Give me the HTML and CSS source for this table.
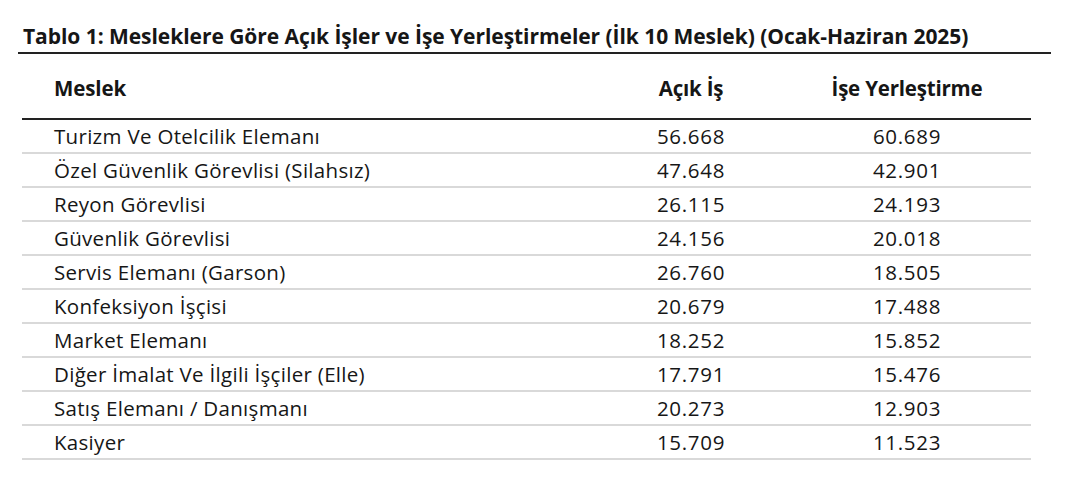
FILE: index.html
```html
<!DOCTYPE html>
<html lang="tr">
<head>
<meta charset="utf-8">
<link rel="stylesheet" href="styles.css">
</head>
<body>
<div class="page">
  <h1 class="title">Tablo 1: Mesleklere Göre Açık İşler ve İşe Yerleştirmeler (İlk 10 Meslek) (Ocak-Haziran 2025)</h1>
  <div class="table">
    <div class="row head">
      <div class="c1">Meslek</div>
      <div class="c2">Açık İş</div>
      <div class="c3">İşe Yerleştirme</div>
    </div>
    <div class="row"><div class="c1">Turizm Ve Otelcilik Elemanı</div><div class="c2 num">56.668</div><div class="c3 num">60.689</div></div>
    <div class="row"><div class="c1">Özel Güvenlik Görevlisi (Silahsız)</div><div class="c2 num">47.648</div><div class="c3 num">42.901</div></div>
    <div class="row"><div class="c1">Reyon Görevlisi</div><div class="c2 num">26.115</div><div class="c3 num">24.193</div></div>
    <div class="row"><div class="c1">Güvenlik Görevlisi</div><div class="c2 num">24.156</div><div class="c3 num">20.018</div></div>
    <div class="row"><div class="c1">Servis Elemanı (Garson)</div><div class="c2 num">26.760</div><div class="c3 num">18.505</div></div>
    <div class="row"><div class="c1">Konfeksiyon İşçisi</div><div class="c2 num">20.679</div><div class="c3 num">17.488</div></div>
    <div class="row"><div class="c1">Market Elemanı</div><div class="c2 num">18.252</div><div class="c3 num">15.852</div></div>
    <div class="row"><div class="c1">Diğer İmalat Ve İlgili İşçiler (Elle)</div><div class="c2 num">17.791</div><div class="c3 num">15.476</div></div>
    <div class="row"><div class="c1">Satış Elemanı / Danışmanı</div><div class="c2 num">20.273</div><div class="c3 num">12.903</div></div>
    <div class="row"><div class="c1">Kasiyer</div><div class="c2 num">15.709</div><div class="c3 num">11.523</div></div>
  </div>
</div>
</body>
</html>
```
FILE: styles.css
```css
html, body {
  margin: 0;
  padding: 0;
  background: #ffffff;
}
body {
  font-family: "Open Sans", "Noto Sans", "Liberation Sans", sans-serif;
  color: #161616;
  width: 1080px;
  height: 485px;
  overflow: hidden;
}
.page {
  padding-top: 22px;
}
.title {
  margin: 0 0 0 18px;
  width: 1033px;
  box-sizing: border-box;
  padding: 0 0 2px 5px;
  font-size: 21px;
  font-weight: 700;
  line-height: 28px;
  letter-spacing: -0.05px;
  border-bottom: 2px solid #222;
  white-space: nowrap;
}
.table {
  margin-left: 22px;
  width: 1009px;
}
.row {
  display: grid;
  grid-template-columns: 559px 220px 212px 1fr;
  align-items: center;
  height: 34px;
  border-bottom: 2px solid #d9d9d9;
  box-sizing: border-box;
  font-size: 20.5px;
  letter-spacing: -0.2px;
}
.row.head {
  height: 66px;
  border-bottom: 2px solid #222;
  font-weight: 700;
  padding-top: 4px;
}
.c1 {
  padding-left: 32px;
  white-space: nowrap;
  letter-spacing: 0.3px;
}
.row.head .c1 {
  letter-spacing: -0.1px;
}
.c2, .c3 {
  text-align: center;
}
.num {
  letter-spacing: 0.7px;
}
```
